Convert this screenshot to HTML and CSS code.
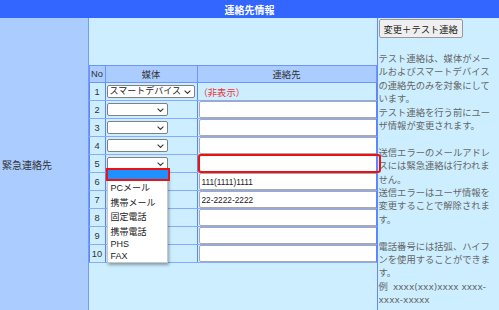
FILE: index.html
```html
<!DOCTYPE html>
<html lang="ja">
	<head>
		<meta charset="utf-8">
		<title>連絡先情報</title>
		<link rel="stylesheet" href="styles.css">
	</head>
	<body>
		<table class="sheet">
			<colgroup>
				<col class="c-label">
				<col class="c-main">
				<col class="c-note">
			</colgroup>
			<tr>
				<th colspan="3" class="title">連絡先情報</th>
			</tr>
			<tr class="body-row">
				<th class="label">緊急連絡先</th>
				<td class="main">
					<table class="list">
						<colgroup>
							<col class="c-no">
							<col class="c-media">
							<col class="c-addr">
						</colgroup>
						<thead>
							<tr><th>No</th><th>媒体</th><th>連絡先</th></tr>
						</thead>
						<tbody>
							<tr>
								<td class="no">1</td>
								<td><select class="sel wide"><option>スマートデバイス</option></select></td>
								<td><span class="hidden-mark">（非表示）</span></td>
							</tr>
							<tr>
								<td class="no">2</td>
								<td><select class="sel"><option></option></select></td>
								<td><input type="text" class="addr"></td>
							</tr>
							<tr>
								<td class="no">3</td>
								<td><select class="sel"><option></option></select></td>
								<td><input type="text" class="addr"></td>
							</tr>
							<tr>
								<td class="no">4</td>
								<td><select class="sel"><option></option></select></td>
								<td><input type="text" class="addr"></td>
							</tr>
							<tr>
								<td class="no">5</td>
								<td class="media-open">
									<select class="sel"><option></option></select>
									<!-- 開いたプルダウン -->
									<ul class="drop">
										<li class="on"></li>
										<li>PCメール</li>
										<li>携帯メール</li>
										<li>固定電話</li>
										<li>携帯電話</li>
										<li class="lat">PHS</li>
										<li class="lat">FAX</li>
									</ul>
								</td>
								<td><input type="text" class="addr err"></td>
							</tr>
							<tr>
								<td class="no">6</td>
								<td><select class="sel"><option></option></select></td>
								<td><input type="text" class="addr" value="111(1111)1111"></td>
							</tr>
							<tr>
								<td class="no">7</td>
								<td><select class="sel"><option></option></select></td>
								<td><input type="text" class="addr" value="22-2222-2222"></td>
							</tr>
							<tr>
								<td class="no">8</td>
								<td><select class="sel"><option></option></select></td>
								<td><input type="text" class="addr"></td>
							</tr>
							<tr>
								<td class="no">9</td>
								<td><select class="sel"><option></option></select></td>
								<td><input type="text" class="addr"></td>
							</tr>
							<tr>
								<td class="no">10</td>
								<td><select class="sel"><option></option></select></td>
								<td><input type="text" class="addr"></td>
							</tr>
						</tbody>
					</table>
				</td>
				<td class="note">
					<div class="btn-row"><button type="button" class="test-btn">変更＋テスト連絡</button></div>
					<p>テスト連絡は、媒体がメールおよびスマートデバイスの連絡先のみを対象にしています。<br>テスト連絡を行う前にユーザ情報が変更されます。</p>
					<p>送信エラーのメールアドレスには緊急連絡は行われません。<br>送信エラーはユーザ情報を変更することで解除されます。</p>
					<p>電話番号には括弧、ハイフンを使用することができます。<br>例&nbsp;&nbsp;<span class="sample">xxxx(xxx)xxxx xxxx-xxxx-xxxxx</span></p>
				</td>
			</tr>
		</table>
	</body>
</html>
```

FILE: styles.css
```css
*{
	margin: 0;
	padding: 0;
}
body{
	font-family: "Liberation Sans", "Noto Sans CJK JP", sans-serif;
	font-size: 9.3px;
	color: #333;
	background-color: #cceeff;
}
.sheet{
	width: 499px;
	border-collapse: collapse;
	table-layout: fixed;
}
.c-label{ width: 88px; }
.c-main{ width: 289px; }
.c-note{ width: 122px; }
.title{
	height: 18px;
	background-color: #3366ff;
	color: #fff;
	font-size: 10px;
	font-weight: bold;
	text-align: center;
}
.body-row{
	height: 292px;
}
.label{
	background-color: #aaccff;
	border-right: 1px solid #7799ff;
	font-size: 10px;
	font-weight: normal;
	text-align: left;
	padding-left: 2px;
	vertical-align: middle;
}
.main{
	background-color: #cceeff;
	vertical-align: middle;
}
.note{
	background-color: #cceeff;
	border-left: 1px solid #6688ff;
	vertical-align: top;
	padding: 1px 2px 0 1px;
	color: #666;
	font-size: 9.3px;
	line-height: 13.4px;
}
.note p{
	width: 114px;
}

/* 連絡先一覧 */
.list{
	width: 287px;
	border-collapse: collapse;
	table-layout: fixed;
	border: 1px solid #5b84ff;
}
.c-no{ width: 16px; }
.c-media{ width: 92px; }
.c-addr{ width: 179px; }
.list thead tr{
	height: 17px;
}
.list th{
	background-color: #aaccff;
	font-weight: normal;
	border: 1px solid #6f94ff;
	text-align: center;
}
.list tbody tr{
	height: 18px;
}
.list td{
	border-top: 1px solid #88aaff;
	border-bottom: 1px solid #88aaff;
	border-left: 1px solid #5b84ff;
	border-right: 1px solid #5b84ff;
	padding: 0 2px 0 1px;
	vertical-align: middle;
}
.list td.no{
	padding: 0;
	text-align: center;
}
.sel{
	display: block;
	width: 61px;
	height: 13px;
	font-family: inherit;
	font-size: 9px;
	line-height: 11px;
	color: #222;
	border: 1px solid #808080;
	border-radius: 2px;
	padding: 0 10px 0 2px;
	-webkit-appearance: none;
	appearance: none;
	background: #fff url("data:image/svg+xml,%3Csvg xmlns='http://www.w3.org/2000/svg' width='7' height='4'%3E%3Cpath d='M.6.6l2.9 2.8L6.4.6' fill='none' stroke='%23333' stroke-width='1.1'/%3E%3C/svg%3E") no-repeat right 3px center;
}
.sel.wide{
	width: 88px;
}
.hidden-mark{
	color: #ee3333;
}
.addr{
	display: block;
	width: 175px;
	height: 15px;
	font-family: inherit;
	font-size: 8.3px;
	color: #222;
	background-color: #fff;
	border: 1px solid #a9a9a9;
	border-radius: 2px;
	padding: 0 2px;
}
.addr.err{
	outline: 2px solid #ee1111;
	outline-offset: -1px;
}

/* 開いたプルダウン */
.media-open{
	position: relative;
}
.drop{
	box-sizing: border-box;
	position: absolute;
	left: 1px;
	top: 13px;
	width: 61px;
	background-color: #fff;
	border: 1px solid #c8c8c8;
	box-shadow: 1px 2px 3px rgba(0,0,0,.35);
	font-size: 9px;
	color: #222;
	z-index: 2;
}
.drop li{
	list-style: none;
	height: 14.5px;
	line-height: 14.5px;
	padding-left: 3px;
	white-space: nowrap;
}
.drop li.lat{
	height: 11.5px;
	line-height: 11.5px;
}
.drop li.on{
	height: 13px;
	margin: -1px -3px 0 -2px;
	background-color: #1e90ff;
	box-shadow: inset 0 0 0 2px #ee1111;
}

/* 説明 */
.btn-row{
	height: 19px;
	margin-bottom: 15px;
}
.test-btn{
	height: 19px;
	padding: 0 4px;
	font-family: inherit;
	font-size: 9.3px;
	color: #222;
	background-color: #efefef;
	border: 1px solid #999;
	border-radius: 2px;
}
.note p + p{
	margin-top: 13.4px;
}
.sample{
	font-family: "DejaVu Sans", sans-serif;
	font-size: 9px;
}
```
